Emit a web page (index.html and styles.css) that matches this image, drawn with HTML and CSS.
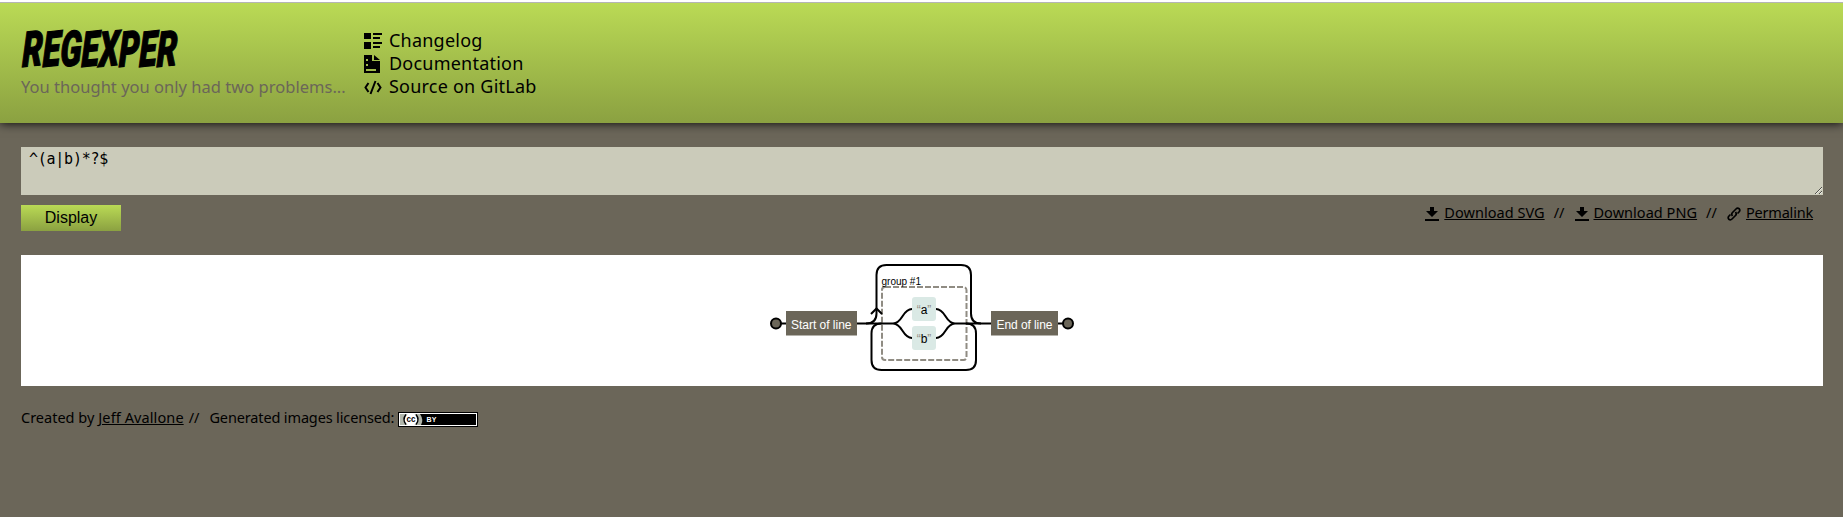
FILE: index.html
```html
<!DOCTYPE html>
<html lang="en">
<head>
<meta charset="utf-8">
<title>Regexper</title>
<link rel="stylesheet" href="styles.css">
</head>
<body>
<header class="header">
  <div class="brand">
    <svg class="logo" width="180" height="50" viewBox="0 0 180 50"><text transform="translate(1 40) skewX(-4)" rotate="-4" textLength="155" lengthAdjust="spacingAndGlyphs">REGEXPER</text></svg>
    <div class="tagline">You thought you only had two problems...</div>
  </div>
  <ul class="nav">
    <li><svg class="icon" viewBox="0 0 18 18"><path d="M0 1h7v6H0zM0 10h7v7H0zM9 1h9v2H9zM9 5h7v2H9zM9 10h9v2H9zM9 14h7v2H9z"/></svg><a class="n1">Changelog</a></li>
    <li><svg class="icon" viewBox="0 0 18 18"><path fill-rule="evenodd" d="M0 0h8v6h8v12H0zM10 0l6 5h-6zM2 4v2h2V4zM2 9v2h2V9zM2 14v2h10v-2z"/></svg><a class="n2">Documentation</a></li>
    <li><svg class="icon" viewBox="0 0 18 18"><path class="stroke" d="M4.500 5L1.500 9.500l3 4.500M13.500 5l3 4.500-3 4.500M11.500 3L6.500 16"/></svg><a class="n3">Source on GitLab</a></li>
  </ul>
</header>
<main class="main">
  <textarea class="input" spellcheck="false">^(a|b)*?$</textarea>
  <div class="actions">
    <button class="display">Display</button>
    <div class="links">
      <svg class="small" viewBox="0 0 14 14"><path d="M5 0h4v4h4L7 10 1 4h4zM0 12h14v2H0z"/></svg><a class="svg-link">Download SVG</a><span class="sep">//</span>
      <svg class="small" viewBox="0 0 14 14"><path d="M5 0h4v4h4L7 10 1 4h4zM0 12h14v2H0z"/></svg><a class="png-link">Download PNG</a><span class="sep">//</span>
      <svg class="small" viewBox="0 0 14 14"><path class="stroke thin" d="M5.500 9Q4 7 5.500 5.500L9 2Q10.500.500 12.200 1.800 13.500 3.500 12 5L10.500 6.500M8.500 5Q10 7 8.500 8.500L5 12Q3.500 13.500 1.800 12.200.500 10.500 2 9L3.500 7.500"/></svg><a class="perma">Permalink</a>
    </div>
  </div>
  <div class="results">
    <svg class="diagram" width="330" height="131" viewBox="757 255 330 131">
      <rect class="group" x="882" y="287" width="84.500" height="73" rx="3"/>
      <text class="label" x="881.500" y="284.500" textLength="39.500" lengthAdjust="spacingAndGlyphs">group #1</text>
      <g class="line">
        <path d="M776 323.500H893M955 323.500H1068"/>
        <path d="M866 323.500q10.500 0 10.500-10V275q0-10 10-10H961q10 0 10 10V313.500q0 10 10 10"/>
        <path d="M871 314l5.500-5.500 5.500 5.500"/>
        <path d="M881.500 323.500q-10 0-10 10V360q0 10 10 10H966q10 0 10-10V333.500q0-10-10-10"/>
        <path d="M893 323.500q5 0 9.500-7.250t9.500-7.250M893 323.500q5 0 9.500 7.250t9.500 7.250M936 309q5 0 9.500 7.250t9.500 7.250M936 338q5 0 9.500-7.250t9.500-7.250"/>
        <circle cx="776" cy="323.500" r="5"/><circle cx="1068" cy="323.500" r="5"/>
      </g>
      <rect class="anchor" x="786" y="311" width="71" height="24.500"/>
      <text class="anchor-text" x="791" y="329" textLength="60.500">Start of line</text>
      <rect class="anchor" x="991" y="311" width="67" height="24.500"/>
      <text class="anchor-text" x="996.500" y="329" textLength="56">End of line</text>
      <rect class="literal" x="912" y="297" width="24" height="24" rx="3"/>
      <text class="lit-text" x="924" y="314"><tspan class="quote">“</tspan>a<tspan class="quote">”</tspan></text>
      <rect class="literal" x="912" y="326" width="24" height="24" rx="3"/>
      <text class="lit-text" x="924" y="343"><tspan class="quote">“</tspan>b<tspan class="quote">”</tspan></text>
    </svg>
  </div>
</main>
<footer class="footer">
  <span class="f1">Created by</span><a class="f2">Jeff Avallone</a><span class="f3">//</span><span class="f4">Generated images licensed:</span>
  <svg class="badge" width="80" height="15" viewBox="0 0 80 15"><path d="M0 0h80v15H0z"/><path fill="#fff" d="M1 1h78v13H1z"/><path d="M2 2h76v11H2z"/><path fill="#b2b7ac" d="M2 2h20q4 6 1 11H2z"/><circle cx="13" cy="7.500" r="6.500" fill="#fff"/><path class="ring" d="M8 2.500q-4 5 0 10M18 2.500q4 5 0 10"/><text class="cc" x="8.500" y="10" textLength="9" lengthAdjust="spacingAndGlyphs">cc</text><text class="by" x="28.500" y="10" textLength="10">BY</text></svg>
</footer>
</body>
</html>
```
FILE: styles.css
```css
* { box-sizing: border-box; }
body { margin: 0; padding-top: 2px; background: linear-gradient(#fff 2px, #6b6659 2px) no-repeat #6b6659; font-family: "Noto Sans", sans-serif; color: #000; min-height: 517px; }
.header { height: 121px; border-top: 1px solid #b5b5b5; background: linear-gradient(#bada55, #8ba141); box-shadow: 0 0 10px #000; clip-path: inset(0 0 -20px 0); padding: 24px 21px; display: flex; }
.brand { width: 343px; white-space: nowrap; }
.logo { display: block; overflow: visible; }
.logo text { font: italic 900 49px Roboto, sans-serif; stroke: #000; stroke-width: 1.200px; }
.tagline { font-size: 16.500px; letter-spacing: .02px; line-height: 22px; color: #6b6659; margin-top: -1px; }
.nav { list-style: none; margin: 2px 0 0; padding: 0; font-size: 18px; letter-spacing: .22px; line-height: 23px; white-space: nowrap; }
.nav li { display: flex; height: 23px; align-items: center; gap: 7px; }
.icon { width: 18px; height: 18px; }
.stroke { fill: none; stroke: #000; stroke-width: 2; }
.thin { stroke-width: 1.700; }
.main { padding: 24px 20px 0 21px; }
.input { display: block; width: 100%; height: 48px; border: 0; outline: 0; background: #cbcbba; padding: 0 8px; font: 15px/24px "DejaVu Sans Mono", monospace; letter-spacing: -.25px; resize: vertical; overflow: hidden; }
.actions { display: flex; justify-content: space-between; margin-top: 10px; height: 50px; }
.display { width: 100px; height: 26px; border: 0; padding: 0; background: linear-gradient(#bada55, #8ba141); font: 16px "Liberation Sans", sans-serif; }
.links { display: flex; font-size: 14.500px; letter-spacing: .04px; line-height: 18px; padding-right: 10px; margin-top: -2px; white-space: nowrap; }
.links a, .f2 { text-decoration: underline; }
.links .perma { letter-spacing: -.2px; }
.small { width: 14px; height: 14px; margin: 4px 5px 0 0; }
.sep { margin: 0 10px 0 9px; }
.results { background: #fff; height: 131px; display: flex; justify-content: center; }
.diagram { display: block; }
.line { fill: none; stroke: #000; stroke-width: 2; }
.line circle { fill: #6b6659; }
.group { fill: none; stroke: #908c83; stroke-width: 2; stroke-dasharray: 6 2; }
.label { font: 10px "Liberation Sans", sans-serif; }
.anchor { fill: #6b6659; }
.anchor-text { font: 12px "Liberation Sans", sans-serif; fill: #fff; }
.literal { fill: #dae9e5; }
.lit-text { font: 12px "Liberation Sans", sans-serif; text-anchor: middle; }
.quote { fill: #908c83; }
.footer { display: flex; padding: 21px 21px; font-size: 14.500px; line-height: 20px; white-space: nowrap; }
.f2 { margin-left: 4px; letter-spacing: .1px; }
.f3 { margin: 0 10px 0 5px; }
.f4 { letter-spacing: -.14px; }
.badge { margin: 5px 0 0 4px; }
.ring { fill: none; stroke: #000; stroke-width: 1.500; }
.cc { font: bold 9px "Liberation Sans", sans-serif; }
.by { font: bold 7px "Liberation Sans", sans-serif; fill: #fff; }
```
